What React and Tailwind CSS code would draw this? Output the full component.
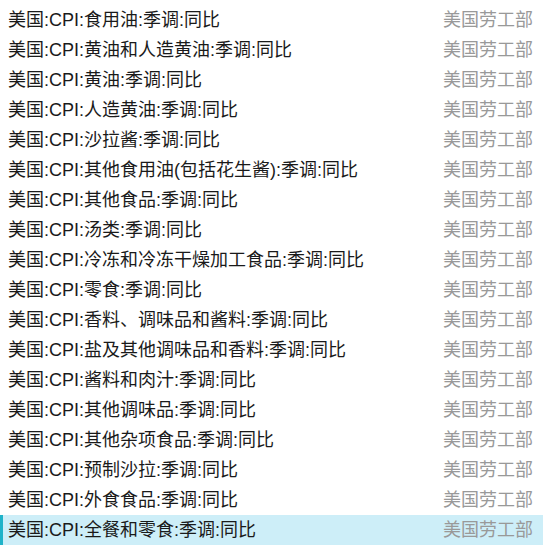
export default function App() {
  const rows = [
    "美国:CPI:食用油:季调:同比",
    "美国:CPI:黄油和人造黄油:季调:同比",
    "美国:CPI:黄油:季调:同比",
    "美国:CPI:人造黄油:季调:同比",
    "美国:CPI:沙拉酱:季调:同比",
    "美国:CPI:其他食用油(包括花生酱):季调:同比",
    "美国:CPI:其他食品:季调:同比",
    "美国:CPI:汤类:季调:同比",
    "美国:CPI:冷冻和冷冻干燥加工食品:季调:同比",
    "美国:CPI:零食:季调:同比",
    "美国:CPI:香料、调味品和酱料:季调:同比",
    "美国:CPI:盐及其他调味品和香料:季调:同比",
    "美国:CPI:酱料和肉汁:季调:同比",
    "美国:CPI:其他调味品:季调:同比",
    "美国:CPI:其他杂项食品:季调:同比",
    "美国:CPI:预制沙拉:季调:同比",
    "美国:CPI:外食食品:季调:同比",
    "美国:CPI:全餐和零食:季调:同比",
  ];
  return (
    <div
      className="w-[543px] h-[546px] overflow-hidden bg-white pt-[5px]"
      style={{ fontFamily: '"Liberation Sans", "Noto Sans CJK SC", sans-serif' }}
    >
      {rows.map((r, i) => {
        const last = i === rows.length - 1;
        return (
          <div
            key={i}
            className={
              last
                ? "flex h-[30px] items-center justify-between border-l-[3px] border-[#1fb3c9] bg-[#cdeef8] pl-[5px] pr-[10px]"
                : "flex h-[30px] items-center justify-between pl-[8px] pr-[10px]"
            }
          >
            <span className="text-[18px] leading-[30px] text-[#1a1a1a] whitespace-nowrap">{r}</span>
            <span className="text-[18px] leading-[30px] text-[#999999] whitespace-nowrap">美国劳工部</span>
          </div>
        );
      })}
    </div>
  );
}
